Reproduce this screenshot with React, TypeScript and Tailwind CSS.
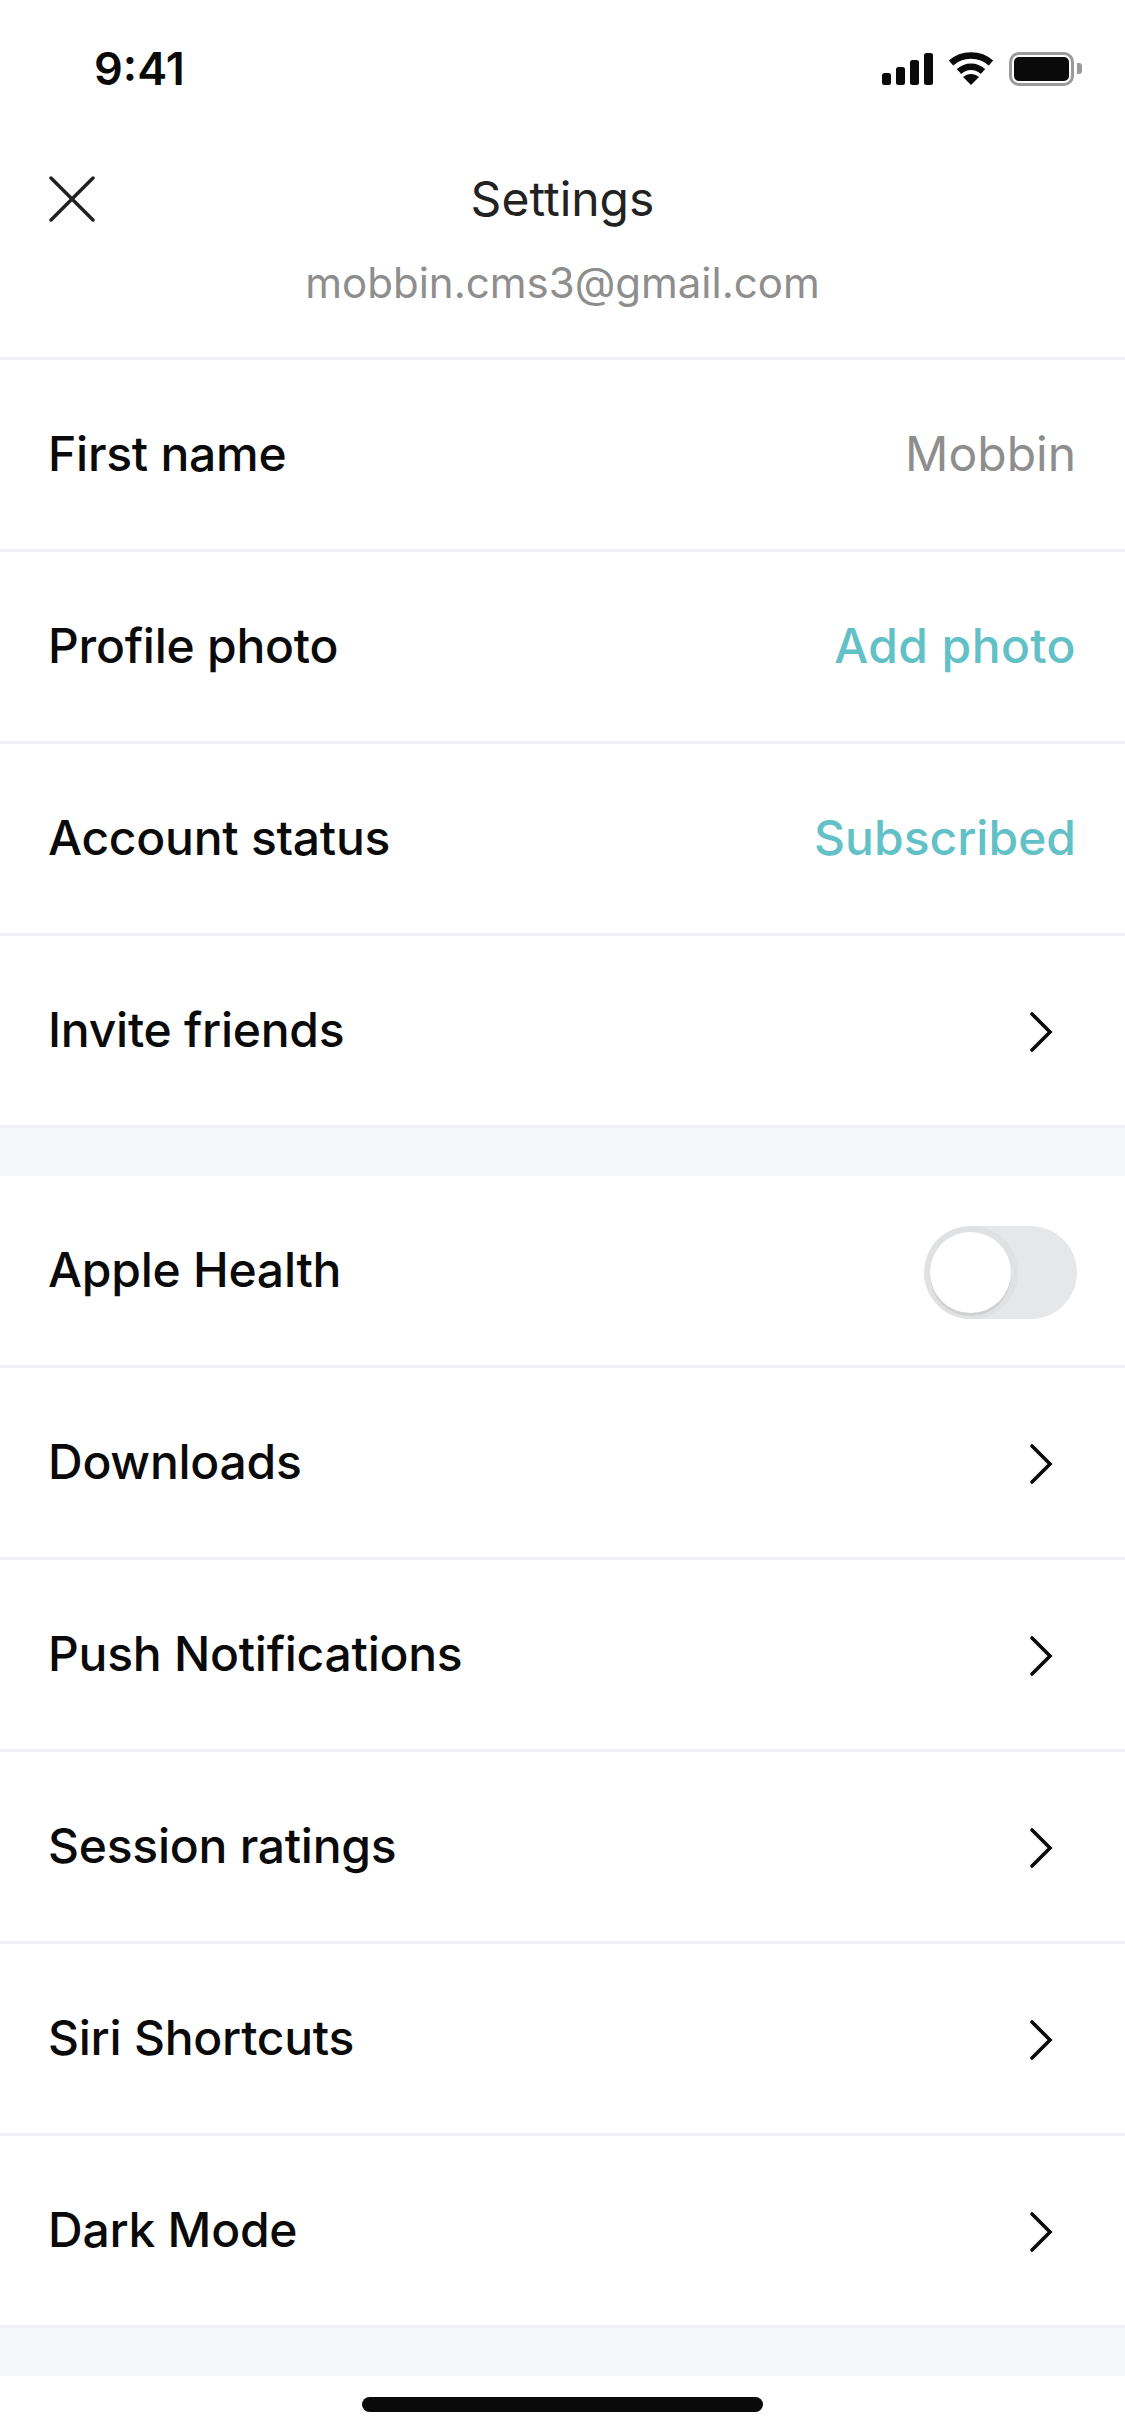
const FONT = "font-['Inter','Noto_Sans',sans-serif]";

function Chevron() {
  return (
    <svg width="24" height="42" viewBox="0 0 24 42" fill="none" className="mr-[24px] mt-[3px]">
      <path d="M3 3 L21 21 L3 39" stroke="#0a0a0a" strokeWidth="3.6" strokeLinecap="round" strokeLinejoin="miter" />
    </svg>
  );
}

function Toggle() {
  return (
    <div className="relative w-[153px] h-[93px] mt-[3px] rounded-full bg-[#e6e7e9] overflow-hidden">
      <div className="absolute left-0 top-0 w-[94px] h-[93px] rounded-full bg-[#dfe1e2]" />
      <div className="absolute left-[6px] top-[6px] w-[81px] h-[81px] rounded-full bg-white shadow-[0_3px_0_#d0d1d1]" />
    </div>
  );
}

function Row({ label, children }: { label: string; children?: React.ReactNode }) {
  return (
    <div className="h-[192px] flex items-center justify-between px-[48px] bg-white border-b-[3px] border-[#eef0f3]">
      <span className="text-[48px] font-medium tracking-[-0.25px] text-[#0a0a0a] pb-[2px]">{label}</span>
      {children}
    </div>
  );
}

function Signal() {
  return (
    <svg width="51" height="32" viewBox="0 0 51 32" fill="#0a0a0a">
      <rect x="0" y="20" width="9" height="12" rx="2.5" />
      <rect x="14" y="14" width="9" height="18" rx="2.5" />
      <rect x="28" y="7" width="9" height="25" rx="2.5" />
      <rect x="42" y="0" width="9" height="32" rx="2.5" />
    </svg>
  );
}

function Wifi() {
  return (
    <svg width="46" height="34" viewBox="0 0 46 34" fill="none">
      <path d="M3 11 C 14 1, 32 1, 43 11" stroke="#0a0a0a" strokeWidth="6.5" />
      <path d="M11 19.5 C 18 13, 28 13, 35 19.5" stroke="#0a0a0a" strokeWidth="6.5" />
      <path d="M15 25 C 20 21, 26 21, 31 25 L23 33 Z" fill="#0a0a0a" />
    </svg>
  );
}

function Battery() {
  return (
    <div className="flex items-center">
      <div className="w-[65px] h-[34px] rounded-[10px] border-[3px] border-[#9a9a9a] p-[2px]">
        <div className="w-full h-full rounded-[5px] bg-[#0a0a0a]" />
      </div>
      <div className="ml-[3px] w-[5px] h-[11px] rounded-r-[3px] bg-[#9a9a9a]" />
    </div>
  );
}

export default function App() {
  return (
    <div className={`${FONT} w-[1125px] h-[2436px] bg-white flex flex-col`}>
      <div className="h-[132px] flex items-center justify-between pt-[5px] pl-[94px] pr-[43px]">
        <span className="text-[45px] font-semibold text-[#0a0a0a] leading-none">9:41</span>
        <div className="flex items-center gap-[15px]">
          <Signal />
          <Wifi />
          <Battery />
        </div>
      </div>

      <div className="h-[228px] border-b-[3px] border-[#eef0f3] flex flex-col items-center">
        <div className="w-full grid grid-cols-[1fr_auto_1fr] items-center px-[49px] h-[133px]">
          <svg width="46" height="46" viewBox="0 0 46 46" fill="none">
            <path d="M2 2 L44 44 M44 2 L2 44" stroke="#222222" strokeWidth="3.5" strokeLinecap="round" />
          </svg>
          <span className="text-[48px] text-[#222222]">Settings</span>
          <span />
        </div>
        <span className="text-[42px] text-[#8e8e8e] leading-none mt-[-3px]">mobbin.cms3@gmail.com</span>
      </div>

      <Row label="First name">
        <span className="text-[48px] text-[#8e8e8e] mr-[1px] pb-[2px]">Mobbin</span>
      </Row>
      <Row label="Profile photo">
        <span className="text-[48px] font-medium tracking-[0.4px] text-[#62c0c7] mr-[1px] pb-[2px]">Add photo</span>
      </Row>
      <Row label="Account status">
        <span className="text-[48px] font-medium text-[#62c0c7] mr-[1px] pb-[2px]">Subscribed</span>
      </Row>
      <Row label="Invite friends">
        <Chevron />
      </Row>

      <div className="h-[48px] bg-[#f6f7f9]" />

      <Row label="Apple Health">
        <Toggle />
      </Row>
      <Row label="Downloads">
        <Chevron />
      </Row>
      <Row label="Push Notifications">
        <Chevron />
      </Row>
      <Row label="Session ratings">
        <Chevron />
      </Row>
      <Row label="Siri Shortcuts">
        <Chevron />
      </Row>
      <Row label="Dark Mode">
        <Chevron />
      </Row>

      <div className="h-[48px] bg-[#f6f7f9]" />

      <div className="flex-1 flex justify-center pt-[21px]">
        <div className="w-[401px] h-[15px] rounded-full bg-[#0a0a0a]" />
      </div>
    </div>
  );
}
